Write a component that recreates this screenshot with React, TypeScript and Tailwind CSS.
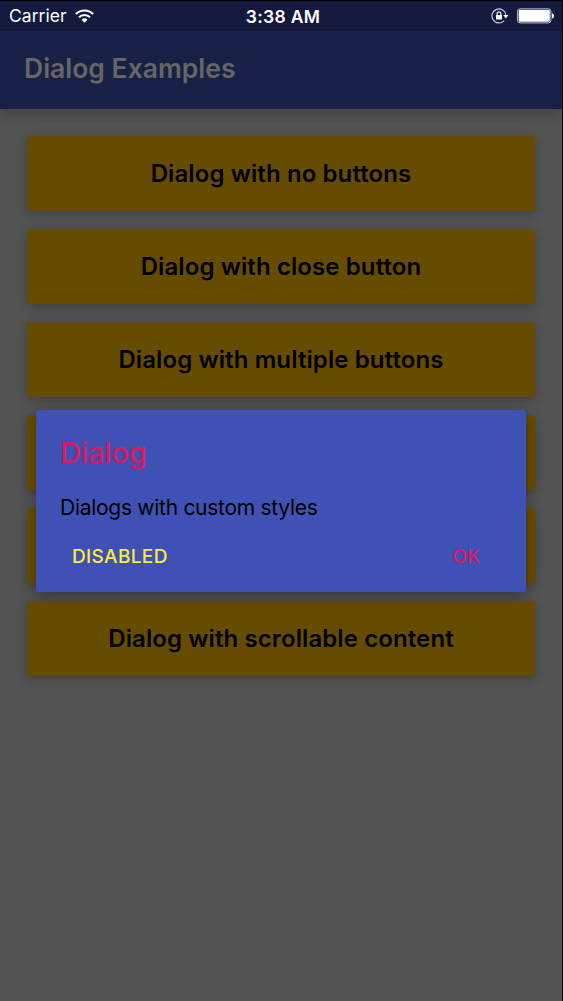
import React from "react";

type Row = { id: number; label?: string };

const rows: Row[] = [
  { id: 1, label: "Dialog with no buttons" },
  { id: 2, label: "Dialog with close button" },
  { id: 3, label: "Dialog with multiple buttons" },
  { id: 4 },
  { id: 5 },
  { id: 6, label: "Dialog with scrollable content" },
];

function WifiIcon() {
  return (
    <svg width="19" height="14" viewBox="0 0 19 14" fill="none" stroke="#fff" strokeWidth="2.1">
      <path d="M0.9 5a12.2 12.2 0 0 1 17.2 0" />
      <path d="M4 8.2a7.8 7.8 0 0 1 11 0" />
      <path d="M9.5 13.7 6.6 10.8a4.1 4.1 0 0 1 5.8 0z" fill="#fff" stroke="none" />
    </svg>
  );
}

function RotationLockIcon() {
  return (
    <svg width="18" height="16" viewBox="0 0 18 16" fill="none">
      <path d="M13.2 12.6A7 7 0 1 1 14.9 7.2" stroke="#c9cbd8" strokeWidth="1.2" />
      <path d="M12.2 7.1h5.2L14.8 10.4z" fill="#fff" />
      <path d="M6.1 7.6V5.7a1.9 1.9 0 0 1 3.8 0v1.9" stroke="#fff" strokeWidth="1.2" />
      <rect x="5" y="7.1" width="6" height="4.4" rx="0.5" fill="#fff" />
    </svg>
  );
}

function BatteryIcon() {
  return (
    <svg width="38" height="16" viewBox="0 0 38 16">
      <rect x="0.6" y="0.9" width="33.3" height="14" rx="2.4" fill="none" stroke="#c9cbd8" strokeWidth="1" />
      <rect x="1.7" y="2" width="31.1" height="11.8" rx="1.3" fill="#fff" />
      <path d="M35 5.2c2.6 0.6 2.6 4.8 0 5.4z" fill="#fff" />
    </svg>
  );
}

export default function App() {
  return (
    <div className="relative h-[1001px] w-[563px] overflow-hidden border-t border-r border-black bg-[#535353] font-['Inter','Liberation_Sans',sans-serif]">
      <div className="shadow-[0_4px_14px_rgba(0,0,0,0.25)]">
        <div className="grid h-[30px] grid-cols-3 items-center bg-[#14193e] text-white">
          <div className="flex items-center gap-[8px] pl-[9px]">
            <span className="text-[17.5px] leading-[30px] tracking-[0.05px]">Carrier</span>
            <WifiIcon />
          </div>
          <span className="pt-px pl-[4px] text-center text-[17.5px] leading-[29px] font-semibold tracking-[0.3px]">3:38 AM</span>
          <div className="flex items-center justify-end gap-[8px] pr-[7px]">
            <RotationLockIcon />
            <BatteryIcon />
          </div>
        </div>
        <header className="flex h-[78px] items-center bg-[#192046] pb-[3px] pl-6">
          <h1 className="text-[26.5px] font-semibold text-[#666666]">Dialog Examples</h1>
        </header>
      </div>
      <main className="flex flex-col gap-[18px] pt-[27px] pr-[27px] pl-[27px]">
        {rows.map((row) => (
          <button
            key={row.id}
            className="h-[75px] w-full rounded-[3px] bg-[#664c00] text-[24px] font-semibold tracking-[0.1px] text-black shadow-[0_3px_12px_rgba(0,0,0,0.24)]"
          >
            {row.label}
          </button>
        ))}
      </main>
      <section
        role="dialog"
        className="absolute top-[409px] left-[36px] flex h-[182px] w-[490px] flex-col rounded-[3px] bg-[#3f51b5] px-6 pt-[23px] shadow-[0_4px_14px_rgba(0,0,0,0.28)]"
      >
        <h2 className="text-[29px] leading-[40px] font-medium tracking-[-0.15px] text-[#d81b60]">Dialog</h2>
        <p className="mt-[20px] text-[21px] leading-[30px] tracking-[-0.28px] text-black">Dialogs with custom styles</p>
        <div className="mt-[19px] flex justify-between pr-[22px] pl-3 text-[19px] leading-[30px] font-medium">
          <span className="tracking-[0.35px] text-[#ffeb3b]">DISABLED</span>
          <span className="text-[#d81b60]">OK</span>
        </div>
      </section>
    </div>
  );
}
